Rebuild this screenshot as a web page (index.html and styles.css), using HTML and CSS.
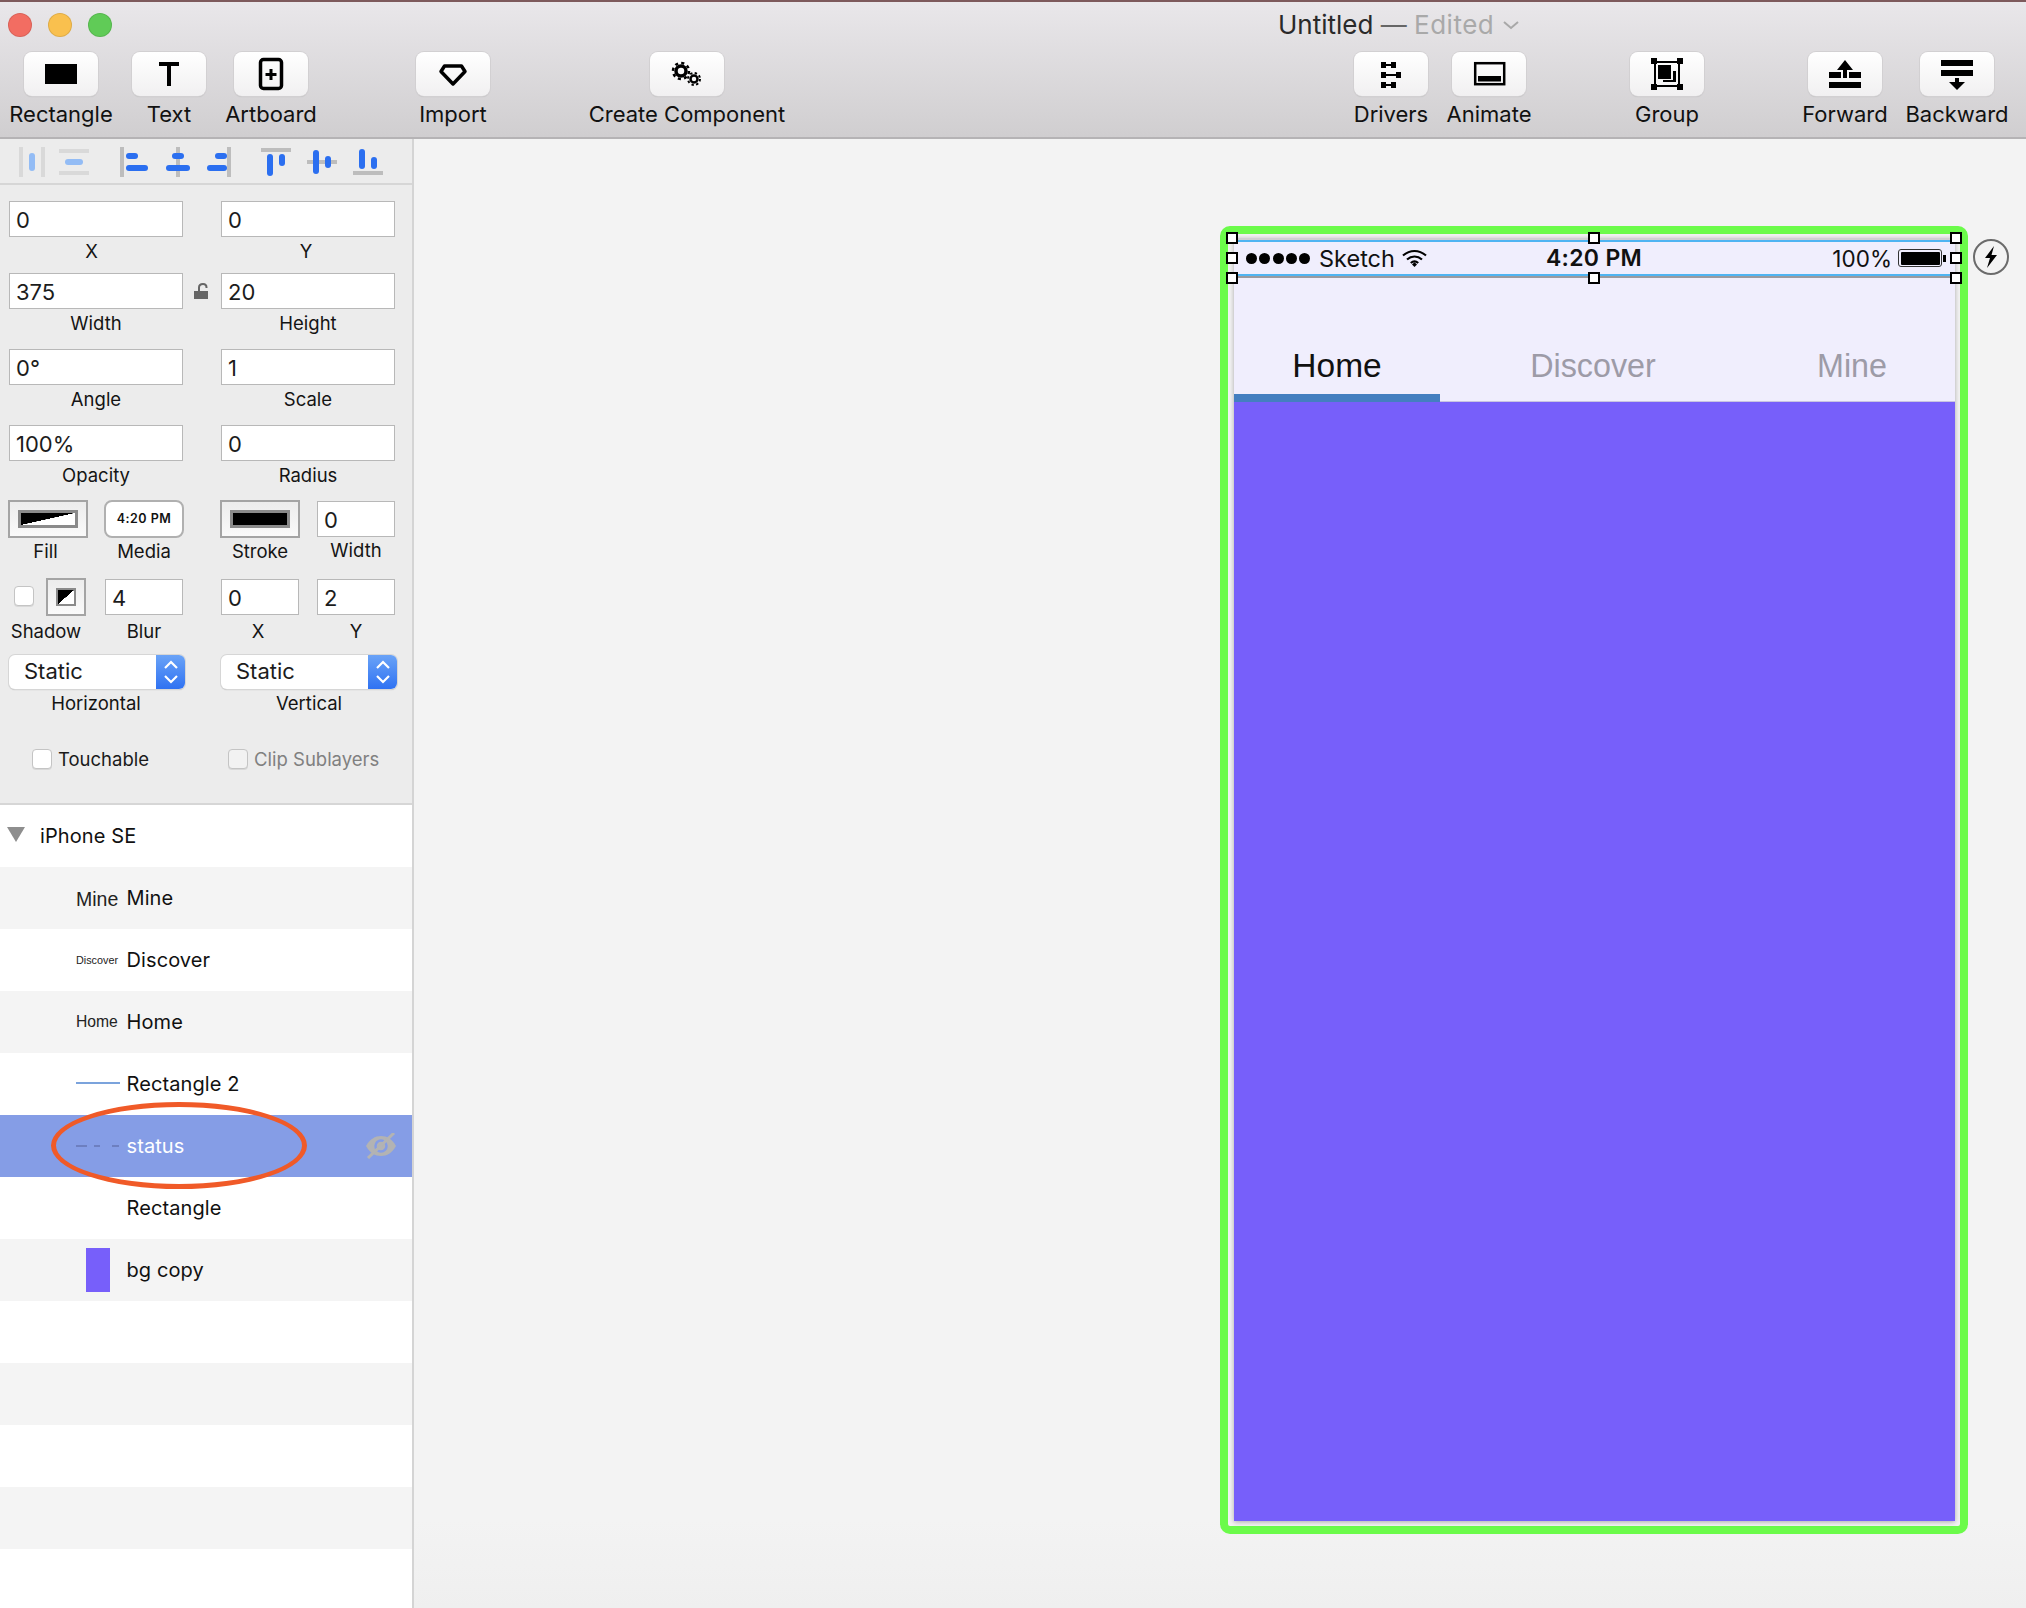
FILE: index.html
```html
<!DOCTYPE html>
<html lang="en">
<head>
<meta charset="utf-8">
<title>Untitled — Edited</title>
<link rel="stylesheet" href="styles.css">
</head>
<body>
<div class="app">
  <header class="toolbar">
    <div class="titlebar">
      <div class="lights"><span class="light red"></span><span class="light yellow"></span><span class="light green"></span></div>
      <div class="title">Untitled <span class="dim-dash">—</span> <span class="dim">Edited</span>
        <svg class="chev" width="16" height="10" viewBox="0 0 16 10"><path d="M1 2l7 6 7-6" fill="none" stroke="#a8a8a8" stroke-width="2"/></svg>
      </div>
    </div>
    <div class="tools">
      <div class="tool"><div class="btn"><svg viewBox="0 0 74 44"><rect x="21" y="12" width="32" height="20"/></svg></div><span>Rectangle</span></div>
      <div class="tool g34"><div class="btn"><svg viewBox="0 0 74 44"><path d="M27 10h20v4h-8v20h-4V14h-8z"/></svg></div><span>Text</span></div>
      <div class="tool g28"><div class="btn"><svg viewBox="0 0 74 44"><rect x="26.500" y="7.500" width="21" height="29" rx="3" fill="none" stroke="#000" stroke-width="3.500"/><path d="M35.500 17h3v4h4v3h-4v4h-3v-4h-4v-3h4z"/></svg></div><span>Artboard</span></div>
      <div class="tool g108"><div class="btn"><svg viewBox="0 0 74 44"><path d="M28.500 14h17l3.500 5.500-12 12.500-12-12.500z" fill="none" stroke="#000" stroke-width="3.500" stroke-linejoin="round"/></svg></div><span>Import</span></div>
      <div class="tool g160"><div class="btn"><svg viewBox="0 0 74 44"><circle cx="31" cy="19" r="5" fill="none" stroke="#000" stroke-width="3.500"/><circle cx="31" cy="19" r="8" fill="none" stroke="#000" stroke-width="2.500" stroke-dasharray="3.100 3.180"/><circle cx="44" cy="27" r="3.500" fill="none" stroke="#000" stroke-width="2.500"/><circle cx="44" cy="27" r="6" fill="none" stroke="#000" stroke-width="2" stroke-dasharray="2.350 2.360"/></svg></div><span>Create Component</span></div>
      <div class="tool g630"><div class="btn"><svg viewBox="0 0 74 44"><path d="M27 10h5v2h5v-2h5v6h-5v-2h-5v2h-5zM27 20h5v2h10v-2h5v6h-5v-2H32v2h-5zM27 30h5v2h5v-2h5v6h-5v-2h-5v2h-5z"/></svg></div><span>Drivers</span></div>
      <div class="tool g24"><div class="btn"><svg viewBox="0 0 74 44"><rect x="23.200" y="11.200" width="29" height="21" fill="none" stroke="#000" stroke-width="2.500"/><rect x="26" y="24" width="23" height="5.500"/></svg></div><span>Animate</span></div>
      <div class="tool g104"><div class="btn"><svg viewBox="0 0 74 44"><rect x="25" y="10" width="24" height="24" fill="none" stroke="#000" stroke-width="2"/><rect x="21" y="6" width="6" height="6"/><rect x="47" y="6" width="6" height="6"/><rect x="21" y="32" width="6" height="6"/><rect x="47" y="32" width="6" height="6"/><rect x="28" y="13" width="13" height="14"/><path d="M43 19h3v11h-13v-2h10z"/></svg></div><span>Group</span></div>
      <div class="tool g104"><div class="btn"><svg viewBox="0 0 74 44"><path d="M37 8l8 10h-6v8h-4v-8h-6zM21 20h12v6H21zM41 20h12v6H41zM21 30h32v6H21z"/></svg></div><span>Forward</span></div>
      <div class="tool g38"><div class="btn"><svg viewBox="0 0 74 44"><path d="M21 8h32v6H21zM21 18h32v6H21zM35 26h4v4h6l-8 8-8-8h6z"/></svg></div><span>Backward</span></div>
    </div>
  </header>
  <div class="body">
    <aside class="sidebar">
      <div class="alignbar">
        <svg width="412" height="46" viewBox="0 139 412 46">
          <g fill="#d9d9d9"><rect x="19" y="147" width="4" height="30"/><rect x="41" y="147" width="4" height="30"/><rect x="59" y="149" width="30" height="4"/><rect x="59" y="171" width="30" height="4"/></g>
          <g fill="#93bcf5"><rect x="29" y="153" width="6" height="18" rx="3"/><rect x="65" y="159" width="18" height="6" rx="3"/></g>
          <g fill="#bdbdbd"><rect x="120" y="147" width="4" height="30"/><rect x="176" y="147" width="4" height="30"/><rect x="227" y="147" width="4" height="30"/><rect x="261" y="148" width="30" height="4"/><rect x="307" y="160" width="30" height="4"/><rect x="353" y="171" width="30" height="4"/></g>
          <g fill="#2b6ff0">
            <rect x="126" y="153" width="12" height="6" rx="3"/><rect x="126" y="165" width="22" height="6" rx="3"/>
            <rect x="172" y="153" width="12" height="6" rx="3"/><rect x="166" y="165" width="24" height="6" rx="3"/>
            <rect x="215" y="153" width="12" height="6" rx="3"/><rect x="207" y="165" width="20" height="6" rx="3"/>
            <rect x="267" y="154" width="6" height="22" rx="3"/><rect x="279" y="154" width="6" height="12" rx="3"/>
            <rect x="313" y="150" width="6" height="24" rx="3"/><rect x="325" y="156" width="6" height="12" rx="3"/>
            <rect x="359" y="149" width="6" height="20" rx="3"/><rect x="371" y="157" width="6" height="12" rx="3"/>
          </g>
        </svg>
      </div>
      <div class="inspector">
        <div class="row r1">
          <div class="cell"><div class="input">0</div><div class="lbl shift">X</div></div>
          <div class="cell"><div class="input">0</div><div class="lbl shift-s">Y</div></div>
        </div>
        <div class="row r2">
          <div class="cell lockcell"><div class="input">375</div><div class="lbl">Width</div></div>
          <svg class="lock" width="14" height="16" viewBox="0 0 14 16"><path d="M0 8h14v8H0z" fill="#666"/><path d="M5 8V4.500C5 2.500 6.500 1 9 1s3.500 1.500 3.500 3.500V5" fill="none" stroke="#666" stroke-width="2"/></svg>
          <div class="cell"><div class="input">20</div><div class="lbl">Height</div></div>
        </div>
        <div class="row r3">
          <div class="cell"><div class="input">0°</div><div class="lbl">Angle</div></div>
          <div class="cell"><div class="input">1</div><div class="lbl">Scale</div></div>
        </div>
        <div class="row r3">
          <div class="cell"><div class="input">100%</div><div class="lbl">Opacity</div></div>
          <div class="cell"><div class="input">0</div><div class="lbl">Radius</div></div>
        </div>
        <div class="row swatches">
          <div class="cell c80"><div class="well"><div class="swatch half"></div></div><div class="lbl tight shift-fill">Fill</div></div>
          <div class="cell c80 ml16"><div class="media">4:20 PM</div><div class="lbl tight">Media</div></div>
          <div class="cell c80 ml36"><div class="well"><div class="swatch black"></div></div><div class="lbl tight">Stroke</div></div>
          <div class="cell c78 ml17"><div class="input mini">0</div><div class="lbl tight">Width</div></div>
        </div>
        <div class="row shadows">
          <div class="cell shadowcell">
            <div class="shadowctl"><span class="check"></span><div class="well small"><div class="swatch tiny"></div></div></div>
            <div class="lbl tight2">Shadow</div>
          </div>
          <div class="cell c78 ml14"><div class="input mini">4</div><div class="lbl tight2">Blur</div></div>
          <div class="cell c78 ml38"><div class="input mini">0</div><div class="lbl tight2 shift-s">X</div></div>
          <div class="cell c78 ml18"><div class="input mini">2</div><div class="lbl tight2">Y</div></div>
        </div>
        <div class="row selects">
          <div class="cell c176"><div class="select"><span class="val">Static</span><span class="stepper"><svg width="16" height="26" viewBox="0 0 16 26"><path d="M2 9l6-6 6 6M2 17l6 6 6-6" fill="none" stroke="#fff" stroke-width="2.200"/></svg></span></div><div class="lbl sel">Horizontal</div></div>
          <div class="cell c176 ml36"><div class="select"><span class="val">Static</span><span class="stepper"><svg width="16" height="26" viewBox="0 0 16 26"><path d="M2 9l6-6 6 6M2 17l6 6 6-6" fill="none" stroke="#fff" stroke-width="2.200"/></svg></span></div><div class="lbl sel vert">Vertical</div></div>
        </div>
        <div class="row checks">
          <label class="opt"><span class="check"></span>Touchable</label>
          <label class="opt off"><span class="check"></span>Clip Sublayers</label>
        </div>
      </div>
      <div class="layers">
        <div class="layer top"><span class="tri"></span><span class="name">iPhone SE</span></div>
        <div class="layer alt"><span class="thumb t-mine">Mine</span><span class="name">Mine</span></div>
        <div class="layer"><span class="thumb t-disc">Discover</span><span class="name">Discover</span></div>
        <div class="layer alt"><span class="thumb t-home">Home</span><span class="name">Home</span></div>
        <div class="layer"><span class="thumb"><span class="t-line"></span></span><span class="name">Rectangle 2</span></div>
        <div class="layer selected"><span class="thumb"><svg width="44" height="4" viewBox="0 0 44 4"><path d="M0 2h11M18 2h6M36 2h7" stroke="#6d7fc0" stroke-width="2" fill="none"/></svg></span><span class="name">status</span>
          <svg class="eye" width="32" height="26" viewBox="0 0 32 26"><path d="M1 13C5 6 10 3 16 3s11 3 15 10c-4 7-9 10-15 10S5 20 1 13z" fill="#b3b3b3"/><circle cx="16" cy="13" r="5.500" fill="none" stroke="#859de6" stroke-width="2.500"/><path d="M3 25L29 0" stroke="#b3b3b3" stroke-width="3"/></svg>
          <span class="ring"></span>
        </div>
        <div class="layer"><span class="thumb"></span><span class="name">Rectangle</span></div>
        <div class="layer alt"><span class="thumb"><span class="t-bg"></span></span><span class="name">bg copy</span></div>
        <div class="layer"></div>
        <div class="layer alt"></div>
        <div class="layer"></div>
        <div class="layer alt"></div>
        <div class="layer"></div>
      </div>
    </aside>
    <main class="canvas">
      <div class="frame">
        <div class="artboard">
          <div class="status">
            <div class="st-left">
              <span class="dots"><i></i><i></i><i></i><i></i><i></i></span>
              <span class="carrier">Sketch</span>
              <svg class="wifi" width="25" height="18" viewBox="0 0 25 18"><path d="M1 6.500C8 .5 17 .5 24 6.500M5 10.500c4.500-4 10.500-4 15 0M8.800 14c2.200-2 5.200-2 7.400 0" fill="none" stroke="#000" stroke-width="2.200"/><path d="M10 15.500l2.500-2.300 2.500 2.300-2.500 2.500z"/></svg>
            </div>
            <div class="st-time">4:20 PM</div>
            <div class="st-right">
              <span class="pct">100%</span>
              <span class="battery"><span class="fill"></span></span><span class="nub"></span>
            </div>
            <span class="h h1"></span><span class="h h2"></span><span class="h h3"></span>
            <span class="h h4"></span><span class="h h5"></span>
            <span class="h h6"></span><span class="h h7"></span><span class="h h8"></span>
          </div>
          <div class="tabs">
            <div class="tab active">Home</div>
            <div class="tab disc">Discover</div>
            <div class="tab mine">Mine</div>
          </div>
          <div class="content"></div>
        </div>
        <div class="bolt"><svg width="16" height="22" viewBox="0 0 16 22"><path d="M11 0L2 12h5L4 22l10-13H8.500z"/></svg></div>
      </div>
    </main>
  </div>
</div>
</body>
</html>
```
FILE: styles.css
```css
* { box-sizing: border-box; }
html, body { margin: 0; padding: 0; }
body { width: 2026px; height: 1608px; overflow: hidden; font-family: Inter, "Liberation Sans", sans-serif; color: #111; }
.app { display: flex; flex-direction: column; height: 1608px; }

/* toolbar */
.toolbar { height: 139px; flex: none; border-top: 2px solid #7d5a5c; border-bottom: 2px solid #b5b3b5; background: linear-gradient(#e9e7ea, #d0ced0); }
.titlebar { height: 50px; display: flex; align-items: center; }
.lights { display: flex; gap: 16px; padding-left: 8px; margin-top: -4px; }
.light { width: 24px; height: 24px; border-radius: 50%; border: 1px solid rgba(0,0,0,.1); }
.red { background: #f26d62; }
.yellow { background: #f9c04e; }
.green { background: #60cb57; }
.title { margin-left: 1166px; margin-top: -4px; font-size: 26px; line-height: 30px; color: #2a2a2a; white-space: nowrap; }
.dim { color: #a9a9a9; letter-spacing: .5px; }
.dim-dash { color: #666; }
.chev { margin-left: 1px; vertical-align: 4px; }
.tools { display: flex; padding-left: 24px; }
.tool { width: 74px; display: flex; flex-direction: column; align-items: center; white-space: nowrap; font-size: 22px; line-height: 28px; color: #111; }
.tool span { margin-top: 4px; }
.g24 { margin-left: 24px; }
.g28 { margin-left: 28px; }
.g34 { margin-left: 34px; }
.g38 { margin-left: 38px; }
.g104 { margin-left: 104px; }
.g108 { margin-left: 108px; }
.g160 { margin-left: 160px; }
.g630 { margin-left: 630px; }
.btn { width: 74px; height: 44px; flex: none; border-radius: 8px; background: linear-gradient(#fff, #f1f0f1); box-shadow: 0 0 0 1px #d2d0d2, 0 1px 1px #b9b7b9; }
.btn svg { display: block; width: 74px; height: 44px; }

/* layout */
.body { flex: 1; display: flex; min-height: 0; }
.sidebar { width: 414px; flex: none; border-right: 2px solid #d4d4d4; display: flex; flex-direction: column; background: #ececec; }
.alignbar { height: 46px; flex: none; border-bottom: 2px solid #d6d6d6; }
.alignbar svg { display: block; height: 46px; }
.inspector { height: 620px; flex: none; border-bottom: 2px solid #d6d6d6; font-size: 19px; }

/* inspector */
.row { display: flex; padding-left: 9px; }
.r1 { padding-top: 16px; height: 88px; }
.r2 { height: 76px; }
.r3 { height: 76px; }
.cell { width: 174px; margin-right: 38px; flex: none; }
.cell.lockcell { margin-right: 11px; }
.lock { flex: none; margin: 10px 13px 0 0; }
.input { height: 36px; background: #fff; border: 1.500px solid #b8b8b8; padding-left: 6px; font-size: 22px; line-height: 36px; color: #1c1c1c; }
.lbl { text-align: center; line-height: 24px; margin-top: 2px; font-size: 18.500px; color: #141414; white-space: nowrap; }
.shift { padding-right: 9px; }
.shift-s { padding-right: 4px; }
.shift-fill { padding-right: 5px; }
.c80 { width: 80px; margin: 0; }
.c78 { width: 78px; margin: 0; }
.c176 { width: 176px; margin: 0; }
.ml14 { margin-left: 14px; }
.ml16 { margin-left: 16px; }
.ml17 { margin-left: 17px; }
.ml18 { margin-left: 18px; }
.ml36 { margin-left: 36px; }
.ml38 { margin-left: 38px; }
.swatches { padding-left: 8px; margin-top: -1px; height: 78px; }
.well { height: 38px; border: 2px solid #a4a4a4; background: linear-gradient(#ececec, #fafafa); display: flex; align-items: center; justify-content: center; }
.swatch { width: 60px; height: 18px; border: 3px solid #8a8a8a; }
.half { background: linear-gradient(to top left, #fff 50%, #000 50.500%); }
.black { background: #000; }
.media { height: 38px; border: 2px solid #b0b0b0; border-radius: 8px; background: #fff; text-align: center; font-size: 12.500px; font-weight: 600; line-height: 34px; letter-spacing: .5px; }
.input.mini { margin-top: 1px; height: 36px; }
.tight { margin-top: 1px; }
.tight2 { margin-top: 4px; }
.shadows { padding-left: 14px; height: 77px; }
.shadowcell { width: 72px; margin: 0 5px 0 0; }
.shadowctl { display: flex; align-items: center; gap: 12px; height: 38px; }
.well.small { width: 40px; height: 38px; flex: none; }
.swatch.tiny { width: 20px; height: 18px; border-width: 2.500px; background: linear-gradient(to bottom right, #000 50%, #fff 50.500%); }
.shadowcell .lbl { margin-left: -8px; margin-right: -14px; margin-top: 3px; padding-right: 14px; }
.shadowctl .check { margin-top: -2px; }
.check { width: 20px; height: 20px; flex: none; border-radius: 4px; background: #fff; border: 1px solid #c4c4c4; box-shadow: 0 1px 0 #d8d8d8; display: inline-block; }
.selects { height: 93px; }
.select { height: 34px; border-radius: 6px; background: #fff; box-shadow: 0 0 0 1px #d6d6d6, 0 1px 1px #aaa; display: flex; justify-content: space-between; overflow: hidden; }
.val { padding-left: 15px; font-size: 22px; line-height: 33px; color: #1c1c1c; }
.stepper { width: 29px; background: linear-gradient(#6aa3f7, #2f72f2); display: flex; align-items: center; justify-content: center; }
.lbl.sel { margin-top: 2px; padding-right: 2px; }
.lbl.sel.vert { padding-right: 0; }
.checks { padding-left: 32px; }
.opt { display: flex; flex: none; align-items: center; gap: 6px; font-size: 18.500px; color: #1a1a1a; width: 196px; }
.opt.off { color: #808080; }
.opt.off .check { background: #f2f2f2; }

/* layers */
.layers { flex: 1; background: #fff; overflow: hidden; }
.layer { height: 62px; display: flex; align-items: center; padding-left: 76px; position: relative; font-size: 20px; color: #111; }
.layer.alt { background: #f4f4f4; }
.layer.top { padding-left: 7px; }
.tri { width: 0; height: 0; border-left: 9px solid transparent; border-right: 9px solid transparent; border-top: 15px solid #8e8e8e; margin-right: 15px; margin-top: -4px; }
.name { letter-spacing: .1px; }
.thumb { width: 44px; margin-right: 6.500px; flex: none; display: flex; align-items: center; font-family: "Liberation Sans", sans-serif; white-space: nowrap; color: #222; }
.t-mine { font-size: 19.500px; margin-top: 2px; }
.t-disc { font-size: 10.800px; }
.t-home { font-size: 15.700px; }
.t-line { display: block; width: 44px; height: 2px; background: #7ba3dc; margin-top: -3px; }
.t-bg { display: block; width: 24px; height: 44px; margin-left: 10px; background: #775ffa; }
.selected { background: #859de6; color: #fff; }
.eye { position: absolute; left: 365px; top: 18px; }
.ring { position: absolute; left: 51px; top: -13px; width: 256px; height: 87px; border: 5.500px solid #f05a28; border-radius: 50%; }

/* canvas */
.canvas { flex: 1; padding: 87px 0 0 806px; background: linear-gradient(#f3f3f3 94%, #efefef); }
.frame { width: 748px; height: 1308px; border: 8px solid #6bfb4a; border-radius: 10px; padding: 4px 5px 5px 6px; position: relative; }
.artboard { height: 1283px; display: flex; flex-direction: column; background: #f0eefd; box-shadow: 0 1px 5px rgba(0,0,0,.3); }
.status { height: 36px; flex: none; margin-top: 2px; position: relative; display: grid; grid-template-columns: 1fr auto 1fr; align-items: center; border-top: 2px solid #4fb4f2; border-bottom: 2px solid #4fb4f2; box-shadow: 0 2px 0 #9a9a9f, 0 -2px 0 #cfcfd2; font-size: 23.500px; color: #111; padding: 0 9px 0 12px; }
.st-left { display: flex; align-items: center; }
.dots { display: flex; gap: 2.250px; }
.dots i { width: 11px; height: 11px; border-radius: 50%; background: #000; }
.carrier { margin-left: 9px; }
.wifi { margin-left: 7px; }
.st-time { font-weight: 600; font-size: 23px; letter-spacing: .3px; margin-left: -4px; }
.st-right { display: flex; align-items: center; justify-content: flex-end; }
.pct { margin-right: 6px; font-size: 22.500px; }
.battery { width: 44px; height: 18px; border: 1px solid #333; border-radius: 3px; padding: 1.500px; display: block; }
.fill { display: block; height: 100%; background: #000; border-radius: 1px; }
.nub { width: 3px; height: 7px; background: #000; margin-left: 1px; }
.h { position: absolute; width: 12px; height: 12px; background: #fff; border: 2.500px solid #000; }
.h1 { left: -8px; top: -10px; }
.h2 { left: -8px; top: 10px; }
.h3 { left: -8px; top: 30px; }
.h4 { left: 354px; top: -10px; }
.h5 { left: 354px; top: 30px; }
.h6 { right: -7px; top: -10px; }
.h7 { right: -7px; top: 10px; }
.h8 { right: -7px; top: 30px; }
.tabs { height: 126px; flex: none; display: flex; align-items: flex-end; font-family: "Liberation Sans", sans-serif; font-size: 33.500px; color: #9d9ba7; border-bottom: 1px solid #c8c4e0; }
.tab { height: 100%; display: flex; align-items: flex-end; justify-content: center; padding-bottom: 16px; }
.tab.active { width: 206px; color: #111; border-bottom: 8px solid #447fc0; margin-bottom: -1px; padding-bottom: 9px; }
.disc { width: 152px; margin-left: 77px; font-size: 32.300px; }
.mine { margin-left: 133px; width: 100px; font-size: 32.300px; }
.content { flex: 1; background: #775ffa; }
.bolt { position: absolute; left: 745px; top: 5px; width: 36px; height: 36px; border: 2px solid #6b6b6b; border-radius: 50%; display: flex; align-items: center; justify-content: center; }
```
